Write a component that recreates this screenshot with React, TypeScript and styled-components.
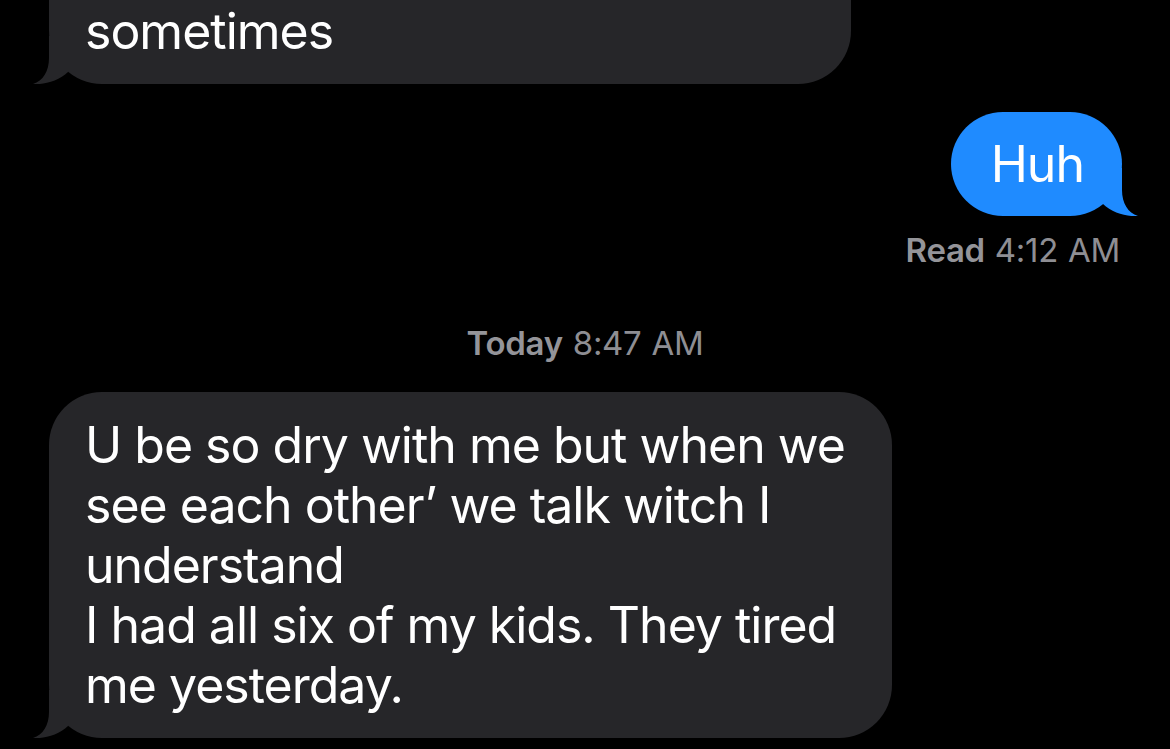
import React from "react";
import styled, { createGlobalStyle } from "styled-components";

const GlobalStyle = createGlobalStyle`
  html, body {
    margin: 0;
    padding: 0;
    background: #000;
  }
  body {
    width: 1170px;
    height: 749px;
    overflow: hidden;
    font-family: Inter, "Liberation Sans", sans-serif;
    -webkit-font-smoothing: antialiased;
  }
`;

const Screen = styled.main`
  width: 1170px;
  height: 749px;
  overflow: hidden;
  background: #000;
`;

const Thread = styled.div<{ $scroll: number }>`
  display: flex;
  flex-direction: column;
  padding: 0 48px 0 49px;
  margin-top: ${(p) => -p.$scroll}px;
`;

type Side = "in" | "out";

const Row = styled.div<{ $side: Side; $gap: number }>`
  display: flex;
  justify-content: ${(p) => (p.$side === "out" ? "flex-end" : "flex-start")};
  margin-top: ${(p) => p.$gap}px;
`;

const Bubble = styled.div<{ $side: Side; $width?: number }>`
  position: relative;
  box-sizing: border-box;
  width: ${(p) => (p.$width ? `${p.$width}px` : "auto")};
  padding: 23px 38px 23px 36px;
  border-radius: 53px;
  background: ${(p) => (p.$side === "out" ? "#1f8bff" : "#262629")};
  color: #fff;
  font-size: 50px;
  line-height: 60px;
  letter-spacing: -1px;
`;

const OutBubble = styled(Bubble)`
  padding: 22px 38px 22px 40px;
  border-radius: 52px;
`;

const Line = styled.span`
  display: block;
  white-space: nowrap;
`;

const TailSvg = styled.svg<{ $side: Side }>`
  position: absolute;
  bottom: 0;
  width: 40px;
  height: 50px;
  ${(p) => (p.$side === "out" ? "right: -16px; transform: scaleX(-1);" : "left: -16px;")}
`;

const Tail: React.FC<{ side: Side; color: string }> = ({ side, color }) => (
  <TailSvg $side={side} viewBox="0 0 40 50" aria-hidden>
    <path
      d="M16 2 L16 24 C16 37 10 47 0 50 C10 51 26 47 35 38 L35 2 Z"
      fill={color}
    />
  </TailSvg>
);

const Meta = styled.div<{ $align: "center" | "right"; $gap: number }>`
  margin-top: ${(p) => p.$gap}px;
  text-align: ${(p) => p.$align};
  margin-right: ${(p) => (p.$align === "right" ? "2px" : "0")};
  margin-left: ${(p) => (p.$align === "center" ? "-1px" : "0")};
  font-size: 33px;
  line-height: 40px;
  color: #8e8e93;
  letter-spacing: -0.3px;
  word-spacing: 1px;
`;

const MetaStrong = styled.span`
  font-weight: 600;
  color: #949499;
`;

export default function App() {
  return (
    <>
      <GlobalStyle />
      <Screen>
        <Thread $scroll={82}>
          <Row $side="in" $gap={0}>
            <Bubble $side="in" $width={802}>
              <Line>{"\u00a0"}</Line>
              <Line>sometimes</Line>
              <Tail side="in" color="#262629" />
            </Bubble>
          </Row>

          <Row $side="out" $gap={28}>
            <OutBubble $side="out">
              <Line>Huh</Line>
              <Tail side="out" color="#1f8bff" />
            </OutBubble>
          </Row>

          <Meta $align="right" $gap={14}>
            <MetaStrong>Read</MetaStrong> 4:12 AM
          </Meta>

          <Meta $align="center" $gap={53}>
            <MetaStrong>Today</MetaStrong> 8:47 AM
          </Meta>

          <Row $side="in" $gap={29}>
            <Bubble $side="in" $width={843}>
              <Line>U be so dry with me but when we</Line>
              <Line>see each other’ we talk witch I</Line>
              <Line>understand</Line>
              <Line>I had all six of my kids. They tired</Line>
              <Line>me yesterday.</Line>
              <Tail side="in" color="#262629" />
            </Bubble>
          </Row>
        </Thread>
      </Screen>
    </>
  );
}
